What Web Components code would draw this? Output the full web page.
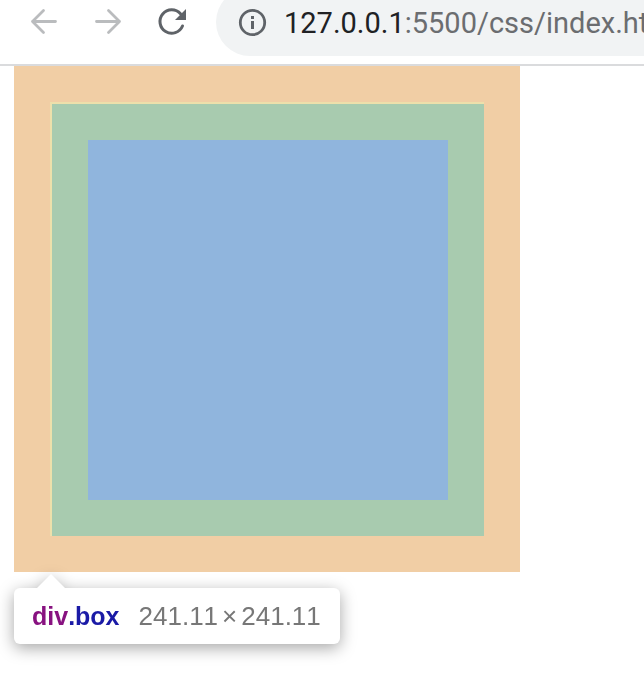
<!DOCTYPE html>
<html lang="en">
<head>
<meta charset="utf-8">
<title>127.0.0.1:5500/css/index.html</title>
<style>
  body { margin: 0; background: #fff; overflow-x: hidden; }
</style>
</head>
<body>
<browser-toolbar>
  <span slot="host">127.0.0.1</span><span slot="path">:5500/css/index.html</span>
</browser-toolbar>
<box-inspector>
  <node-tooltip>
    <span slot="tag">div</span><span slot="class">.box</span>
    <span slot="size">241.11<span style="margin: 0 4px">×</span>241.11</span>
  </node-tooltip>
</box-inspector>

<template id="toolbar">
  <style>
    :host { display: flex; align-items: flex-start; height: 64px; border-bottom: 2px solid #dadbdd; overflow: hidden; background: #fff; }
    nav { display: flex; flex: none; gap: 24px; padding: 2px 24px 0; }
    button { width: 40px; height: 40px; padding: 0; border: 0; background: none; color: #5f6368; }
    button:disabled { color: #babcbe; }
    svg { display: block; }
    .address { flex: 1; min-width: 0; display: flex; align-items: center; gap: 16px; box-sizing: border-box; height: 68px; margin-top: -12px; padding-left: 20px; border-radius: 34px 0 0 34px; background: #f1f3f4; color: #5f6368; overflow: hidden; }
    .address svg { flex: none; }
    .url { padding-top: 2px; font: 29px/40px Roboto, sans-serif; color: #6b6d70; white-space: nowrap; }
    .host { color: #202124; }
  </style>
  <nav aria-label="Navigation">
    <button disabled aria-label="Back"><svg width="40" height="40" viewBox="0 0 40 40" fill="none" stroke="currentColor" stroke-width="2.8" stroke-linecap="round" stroke-linejoin="round"><path d="M31.500 19.500H8.500M19.500 8.500L8.500 19.500L19.500 30.500"/></svg></button>
    <button disabled aria-label="Forward"><svg width="40" height="40" viewBox="0 0 40 40" fill="none" stroke="currentColor" stroke-width="2.8" stroke-linecap="round" stroke-linejoin="round"><path d="M8.500 19.500H31.500M20.500 8.500L31.500 19.500L20.500 30.500"/></svg></button>
    <button aria-label="Reload"><svg width="40" height="40" viewBox="0 0 40 40"><path d="M30.500 24A11.700 11.700 0 1 1 28.500 11.800" fill="none" stroke="currentColor" stroke-width="3" stroke-linecap="round"/><path d="M34 7V18H23Z" fill="currentColor"/></svg></button>
  </nav>
  <div class="address">
    <svg width="32" height="32" viewBox="0 0 32 32" role="img" aria-label="Site information"><circle cx="16.500" cy="16.500" r="12.200" fill="none" stroke="currentColor" stroke-width="2.8"/><path d="M15 10h3v3h-3zM15 15h3v8h-3z" fill="currentColor"/></svg>
    <div class="url"><span class="host"><slot name="host"></slot></span><slot name="path"></slot></div>
  </div>
</template>

<template id="inspector">
  <style>
    :host { display: block; padding: 0 0 40px 14px; }
    .margin { width: fit-content; padding: 36px; background: #f1cea5; }
    .border { border: solid #ede0ab; border-width: 2px 0 0 2px; }
    .padding { padding: 36px; background: #a8cbaf; }
    .content { width: 360px; height: 360px; background: #90b5dd; }
  </style>
  <div class="margin"><div class="border"><div class="padding"><div class="content"></div></div></div></div>
  <slot></slot>
</template>

<template id="tooltip">
  <style>
    :host { display: block; width: fit-content; filter: drop-shadow(0 4px 8px rgba(0,0,0,.35)); font: 26px/56px "Liberation Sans", Arial, sans-serif; font-kerning: none; }
    .arrow { width: 28px; height: 14px; margin: 2px 0 0 23px; background: #fff; clip-path: polygon(50% 0, 100% 100%, 0 100%); }
    .card { display: flex; gap: 19px; height: 56px; padding: 0 19px 0 18px; border-radius: 6px; background: #fff; white-space: nowrap; }
    .name { font-size: 25px; font-weight: 700; color: #1a1aa6; }
    .tag { color: #881280; }
    .size { color: #777; }
  </style>
  <div class="arrow"></div>
  <div class="card"><div class="name"><span class="tag"><slot name="tag"></slot></span><slot name="class"></slot></div><div class="size"><slot name="size"></slot></div></div>
</template>

<script>
  const define = (name, templateId) => customElements.define(name, class extends HTMLElement {
    constructor() {
      super();
      this.attachShadow({ mode: "open" }).append(document.getElementById(templateId).content.cloneNode(true));
    }
  });
  define("browser-toolbar", "toolbar");
  define("box-inspector", "inspector");
  define("node-tooltip", "tooltip");
</script>
</body>
</html>
